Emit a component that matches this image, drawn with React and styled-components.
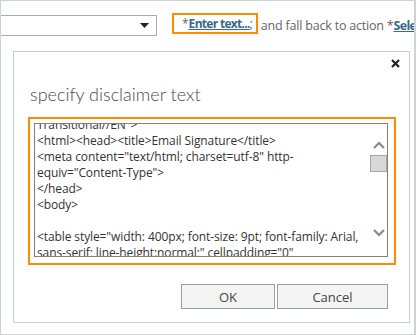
import styled, { createGlobalStyle } from 'styled-components';

const GlobalStyle = createGlobalStyle`
    html, body {
        margin: 0;
        padding: 0;
        background: #ffffff;
    }
    body {
        font-family: 'Open Sans', 'Noto Sans', sans-serif;
    }
`;

const Frame = styled.div`
    box-sizing: border-box;
    width: 416px;
    height: 335px;
    border: 1px solid #cdd4d8;
    border-right-width: 2px;
    overflow: hidden;
    background: #fff;
`;

const TopRow = styled.div`
    display: flex;
    align-items: center;
    height: 21px;
    margin-top: 14px;
    white-space: nowrap;
    font-size: 12px;
    color: #666;
`;

const Select = styled.div`
    box-sizing: border-box;
    display: flex;
    align-items: center;
    justify-content: flex-end;
    width: 157px;
    height: 21px;
    margin-left: -1px;
    padding-right: 7px;
    border: 1px solid #ababab;
    border-left: none;
    background: #fff;
    flex-shrink: 0;
`;

const Highlight = styled.span`
    box-sizing: border-box;
    display: inline-flex;
    align-items: center;
    height: 21px;
    margin-left: 15px;
    margin-top: -4px;
    padding: 0 3px 0 8px;
    border: 2px solid #ff8c00;
    flex-shrink: 0;
`;

const Link = styled.a`
    color: #39688a;
    font-weight: 700;
    text-decoration: underline;
    letter-spacing: -0.7px;
`;

const Rest = styled.span`
    margin-left: 3px;
    font-size: 12.5px;
    letter-spacing: -0.2px;
`;

const Dialog = styled.div`
    box-sizing: border-box;
    display: flex;
    flex-direction: column;
    width: 397px;
    height: 272px;
    margin: 15px 0 0 12px;
    padding: 0 13px 13px 14px;
    border: 1px solid #c8cdd0;
    background: #fff;
`;

const CloseRow = styled.div`
    display: flex;
    justify-content: flex-end;
    height: 20px;
    padding-top: 7px;
    margin-right: -4px;
`;

const Title = styled.h2`
    margin: 2px 0 0 2px;
    font-family: Lato, 'Open Sans', sans-serif;
    font-size: 18px;
    font-weight: 300;
    line-height: 26px;
    color: #4a4a4a;
`;

const Focus = styled.div`
    box-sizing: border-box;
    height: 148px;
    margin-top: 10px;
    padding: 4px 6px 6px 4px;
    border: 2px solid #ff8c00;
`;

const TextArea = styled.div`
    box-sizing: border-box;
    display: flex;
    height: 134px;
    border: 1px solid #828282;
    overflow: hidden;
`;

const Code = styled.div`
    flex: 1;
    overflow: hidden;
    padding-left: 2px;
`;

const CodeInner = styled.div`
    margin-top: -7px;
    font-size: 12px;
    letter-spacing: -0.1px;
    line-height: 16px;
    color: #333;
    white-space: pre;
`;

const ScrollBar = styled.div`
    display: flex;
    flex-direction: column;
    align-items: center;
    width: 17px;
    padding-top: 17px;
    padding-bottom: 19px;
`;

const Thumb = styled.div`
    box-sizing: border-box;
    width: 17px;
    height: 17px;
    margin-top: 6px;
    border: 1px solid #a6a6a6;
    background: #d8d8d8;
`;

const Spacer = styled.div`
    flex: 1;
`;

const Buttons = styled.div`
    display: flex;
    justify-content: flex-end;
    gap: 2px;
    margin-top: auto;
    margin-right: 8px;
`;

const Button = styled.button`
    box-sizing: border-box;
    width: ${(props) => props.width || '94px'};
    height: 25px;
    border: 1px solid #95a2a2;
    background: #f4f4f4;
    color: #444;
    font-family: 'Open Sans', 'Noto Sans', sans-serif;
    font-size: 13px;
    padding: 0;
`;

const Chevron = ({ up }) => (
    <svg width="12" height="8" viewBox="0 0 12 8">
        <polyline
            points={up ? '1,7 6,2 11,7' : '1,1 6,6 11,1'}
            fill="none"
            stroke="#8a8a8a"
            strokeWidth="2.2"
        />
    </svg>
);

const lines = [
    'Transitional//EN">',
    '<html><head><title>Email Signature</title>',
    '<meta content="text/html; charset=utf-8" http-',
    'equiv="Content-Type">',
    '</head>',
    '<body>',
    '',
    '<table style="width: 400px; font-size: 9pt; font-family: Arial,',
    'sans-serif; line-height:normal;" cellpadding="0"',
];

const App = () => {
    return (
        <>
            <GlobalStyle />
            <Frame>
                <TopRow>
                    <Select>
                        <svg width="9" height="5" viewBox="0 0 9 5">
                            <polygon points="0,0 9,0 4.5,5" fill="#222" />
                        </svg>
                    </Select>
                    <Highlight>
                        *<Link>Enter text...</Link>;
                    </Highlight>
                    <Rest>
                        and fall back to action *<Link>Select one...</Link>
                    </Rest>
                </TopRow>

                <Dialog>
                    <CloseRow>
                        <svg width="9" height="9" viewBox="0 0 9 9">
                            <path d="M1 1 L8 8 M8 1 L1 8" stroke="#222" strokeWidth="2.2" />
                        </svg>
                    </CloseRow>
                    <Title>specify disclaimer text</Title>

                    <Focus>
                        <TextArea>
                            <Code>
                                <CodeInner>
                                    {lines.map((l, i) => (
                                        <div key={i}>{l || ' '}</div>
                                    ))}
                                </CodeInner>
                            </Code>
                            <ScrollBar>
                                <Chevron up />
                                <Thumb />
                                <Spacer />
                                <Chevron />
                            </ScrollBar>
                        </TextArea>
                    </Focus>

                    <Buttons>
                        <Button>OK</Button>
                        <Button width="111px">Cancel</Button>
                    </Buttons>
                </Dialog>
            </Frame>
        </>
    );
};

export default App;
